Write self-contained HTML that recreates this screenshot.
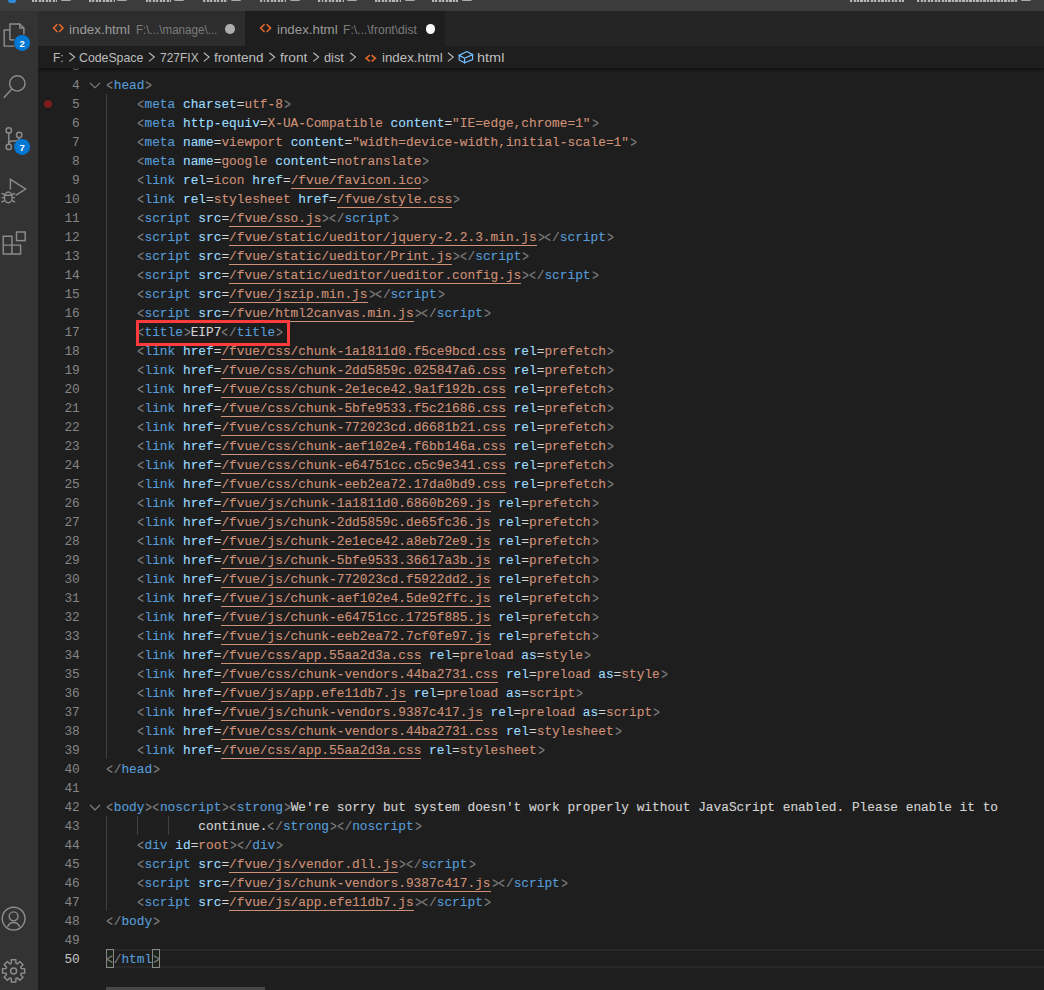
<!DOCTYPE html>
<html><head><meta charset="utf-8">
<style>
html,body{margin:0;padding:0;}
body{width:1044px;height:990px;overflow:hidden;background:#1e1e1e;position:relative;font-family:"Liberation Sans",sans-serif;}
.abs{position:absolute;}
#title{left:0;top:0;width:1044px;height:11px;background:#3c3c3c;overflow:hidden;}
.mi{position:absolute;top:0;height:2px;background:repeating-linear-gradient(90deg,rgba(220,220,220,.75) 0 2px,rgba(220,220,220,.15) 2px 3.5px);}
.br{position:absolute;top:-3px;width:10px;height:3px;border:1px solid rgba(220,220,220,.7);border-top:0;border-radius:0 0 3px 3px;}
#act{left:0;top:11px;width:38px;height:979px;background:#333333;}
#tabs{left:38px;top:11px;width:1006px;height:35px;background:#252526;}
.tab{position:absolute;top:0;height:35px;}
.tl{position:absolute;top:9px;font-size:13px;line-height:16px;color:#969696;white-space:pre;}
.td{position:absolute;top:10px;font-size:11.4px;line-height:16px;color:#7c7c7c;white-space:pre;}
#crumbs{left:38px;top:46px;width:1006px;height:22px;background:#1e1e1e;z-index:5;}
.tx{position:absolute;line-height:16px;white-space:pre;transform-origin:0 0;}
.cr{top:50.2px;font-size:13px;color:#bdbdbd;}
.shadow{position:absolute;left:38px;top:68px;width:1006px;height:4px;background:linear-gradient(rgba(0,0,0,.45),rgba(0,0,0,0));z-index:6;}
.ln{position:absolute;left:106px;height:19px;line-height:21px;white-space:pre;font-family:"Liberation Mono",monospace;font-size:12.82px;color:#d4d4d4;}
.ln i{font-style:normal;-webkit-text-stroke:0.12px currentColor;}
.b{color:#808080}.t{color:#569cd6}.a{color:#9cdcfe}.e{color:#d4d4d4}.v{color:#ce9178}.x{color:#d4d4d4}
.u{color:#ce9178;display:inline-block;vertical-align:top;height:19px;background:linear-gradient(#ce9178,#ce9178) left bottom/100% 1px no-repeat;}
.m{color:#808080;}
.lt,.gt{display:inline-block;vertical-align:top;height:19px;transform-origin:3.85px 9.65px;}
.lt{transform:translate(-0.2px,0.4px) scale(0.86,1.16);}
.gt{transform:translate(0.6px,0.4px) scale(0.86,1.16);}
.num{position:absolute;left:38.8px;width:41px;text-align:right;height:19px;line-height:21px;font-family:"Liberation Mono",monospace;font-size:12.82px;color:#858585;}
.num.cur{color:#c6c6c6;}
.guide{position:absolute;width:1px;background:#404040;}
svg{position:absolute;overflow:visible;}
</style></head><body>
<div id="title" class="abs">
  <div class="abs" style="left:8px;top:0;width:8px;height:3px;background:#2e8ad6;border-radius:0 0 2px 3px;"></div>
  <div class="mi" style="left:32px;width:25px"></div><div class="br" style="left:60px"></div>
  <div class="mi" style="left:89px;width:26px"></div><div class="br" style="left:116px"></div>
  <div class="mi" style="left:146px;width:25px"></div><div class="br" style="left:173px"></div>
  <div class="mi" style="left:203px;width:25px"></div><div class="br" style="left:230px"></div>
  <div class="mi" style="left:260px;width:26px"></div><div class="br" style="left:289px"></div>
  <div class="mi" style="left:318px;width:26px"></div><div class="br" style="left:346px"></div>
  <div class="mi" style="left:375px;width:26px"></div><div class="br" style="left:404px"></div>
  <div class="mi" style="left:432px;width:26px"></div><div class="br" style="left:461px"></div>
  <div class="mi" style="left:850px;width:54px"></div>
  <div class="mi" style="left:917px;width:101px"></div>
  <div class="br" style="left:1020px"></div>
</div>
<div id="act" class="abs"></div>
<!-- activity icons -->
<svg width="38" height="990" style="left:0;top:0" fill="none" stroke="#8c8c8c" stroke-width="1.45">
  <!-- explorer -->
  <path d="M9.6 29.9H4.2V46.1H14.5"/>
  <path d="M9.9 39.9V23.9H19.8L23.9 28V34.5"/>
  <path d="M19.8 23.9V28H23.9"/>
  <path d="M9.9 39.9H14.5"/>
  <circle cx="22.1" cy="42.9" r="8" fill="#0078d4" stroke="none"/>
  <!-- search -->
  <circle cx="17.3" cy="83.4" r="7.7"/>
  <path d="M11.8 89L3.8 97.8"/>
  <!-- scm -->
  <circle cx="8.8" cy="130.4" r="2.7"/>
  <circle cx="19.2" cy="135" r="2.7"/>
  <circle cx="8.8" cy="146.9" r="2.7"/>
  <path d="M8.8 133.1V144.2"/>
  <path d="M19.2 137.7C19.2 140 18 141 15.5 141H12.5C10 141 8.8 142 8.8 144.2"/>
  <circle cx="22.1" cy="146.9" r="8" fill="#0078d4" stroke="none"/>
  <!-- debug -->
  <path d="M10.4 189.6V179.3L25.6 189L15.6 195.3"/>
  <ellipse cx="8.3" cy="197.4" rx="3.9" ry="5.3"/>
  <path d="M4.5 195.3H12.1M1.5 193.4L4.6 194.5M15 193.4L12 194.5M1.5 197.6H4.4M15 197.6H12.2M1.5 202L4.8 200.6M15 202L11.8 200.6"/>
  <!-- extensions -->
  <path d="M3.2 245.1H20.6V254H3.2V236.3H11.9V254"/>
  <rect x="16.5" y="232" width="8.7" height="8.6"/>
  <!-- account -->
  <circle cx="13.6" cy="918.6" r="11.4"/>
  <circle cx="13.6" cy="916.3" r="4.4"/>
  <path d="M7.6 926.8C8.6 924 10.8 922.4 13.6 922.4C16.4 922.4 18.6 924 19.6 926.8"/>
</svg>
<svg width="38" height="40" style="left:0;top:950px" viewBox="0 0 38 40">
  <g transform="translate(13.6 20.9)" fill="none" stroke="#8c8c8c" stroke-width="1.45">
    <path d="M-2.33 -7.55L-2.24 -11.07L2.24 -11.07L2.33 -7.55L3.69 -6.99L6.24 -9.42L9.42 -6.24L6.99 -3.69L7.55 -2.33L11.07 -2.24L11.07 2.24L7.55 2.33L6.99 3.69L9.42 6.24L6.24 9.42L3.69 6.99L2.33 7.55L2.24 11.07L-2.24 11.07L-2.33 7.55L-3.69 6.99L-6.24 9.42L-9.42 6.24L-6.99 3.69L-7.55 2.33L-11.07 2.24L-11.07 -2.24L-7.55 -2.33L-6.99 -3.69L-9.42 -6.24L-6.24 -9.42L-3.69 -6.99Z" stroke-linejoin="round"/>
    <circle r="3"/>
  </g>
</svg>
<div class="abs" style="left:14.1px;top:35.6px;width:16px;height:16px;font:bold 9.5px/16px 'Liberation Sans',sans-serif;color:#fff;text-align:center;z-index:3">2</div>
<div class="abs" style="left:14.1px;top:139.6px;width:16px;height:16px;font:bold 9.5px/16px 'Liberation Sans',sans-serif;color:#fff;text-align:center;z-index:3">7</div>

<div id="tabs" class="abs">
  <div class="tab" style="left:0;width:207px;background:#2d2d2d;"></div>
  <div class="tab" style="left:207px;width:200px;background:#1e1e1e;"></div>
</div>
<svg width="1044" height="80" style="left:0;top:0;z-index:7" fill="none" stroke-linecap="square">
  <g stroke="#e8692c" stroke-width="1.5" stroke-linecap="butt">
    <path d="M57.4 24.2L53.6 28.1L57.4 32M59.2 24.2L63 28.1L59.2 32"/>
    <path d="M264.6 24.2L260.6 28.1L264.6 32M266.6 24.2L270.6 28.1L266.6 32"/>
    <path d="M369.8 55.2L366 58.3L369.8 61.4M371.6 55.2L375.4 58.3L371.6 61.4"/>
  </g>
  <g stroke="#b8b8b8" stroke-width="1.15" stroke-linecap="butt">
    <path d="M69.3 52.8L74.6 57.1L69.3 61.4M149 52.8L154.3 57.1L149 61.4M203.8 52.8L209.1 57.1L203.8 61.4M269.3 52.8L274.6 57.1L269.3 61.4M313.3 52.8L318.6 57.1L313.3 61.4M350.2 52.8L355.5 57.1L350.2 61.4M447.9 52.8L453.2 57.1L447.9 61.4"/>
  </g>
  <g stroke="#75beff" stroke-width="1.2" stroke-linejoin="round">
    <path d="M459.2 55.4L466.8 51.5L472.6 54.6V59.6L464.6 62.8L459.2 60Z"/>
    <path d="M459.2 55.4L464.6 58.3L472.6 54.6M464.6 58.3V62.8"/>
  </g>
</svg>
<div class="abs" style="left:225.4px;top:24.4px;width:9.4px;height:9.4px;border-radius:50%;background:#acacac;z-index:7"></div>
<div class="abs" style="left:425.7px;top:24.2px;width:9.4px;height:9.4px;border-radius:50%;background:#f8f8f8;z-index:7"></div>
<div class="abs" style="left:0;top:0;z-index:7">
  <div class="tx" style="left:69.38px;top:21.8px;font-size:13px;color:#9a9a9a;transform:scaleX(1.028)">index.html</div>
  <div class="tx" style="left:135.53px;top:22.1px;font-size:12px;color:#7c7c7c;transform:scaleX(0.968)">F:\...\manage\...</div>
  <div class="tx" style="left:276.78px;top:21.8px;font-size:13px;color:#9a9a9a;transform:scaleX(1.023)">index.html</div>
  <div class="tx" style="left:342.69px;top:22.1px;font-size:12px;color:#7c7c7c;transform:scaleX(1.007)">F:\...\front\dist</div>
  <div class="tx cr" style="left:53.39px;transform:scaleX(0.915)">F:</div>
  <div class="tx cr" style="left:79.13px;transform:scaleX(0.946)">CodeSpace</div>
  <div class="tx cr" style="left:159.55px;transform:scaleX(0.922)">727FIX</div>
  <div class="tx cr" style="left:214.19px;transform:scaleX(1.039)">frontend</div>
  <div class="tx cr" style="left:279.99px;transform:scaleX(1.054)">front</div>
  <div class="tx cr" style="left:324.01px;transform:scaleX(0.98)">dist</div>
  <div class="tx cr" style="left:381.78px;transform:scaleX(1.024)">index.html</div>
  <div class="tx cr" style="left:476.5px;transform:scaleX(1.114)">html</div>
</div>
<div id="crumbs" class="abs"></div>
<div class="shadow"></div>
<div class="guide" style="left:106px;top:94px;height:665px"></div>
<div class="guide" style="left:106px;top:816px;height:95px"></div>
<div class="guide" style="left:137px;top:816px;height:19px"></div>
<div class="guide" style="left:168px;top:816px;height:19px"></div>
<!-- current line border -->
<div class="abs" style="left:106px;top:949px;width:938px;height:15px;border-top:2px solid #282828;border-bottom:2px solid #282828;"></div>
<!-- bracket match -->
<div class="abs" style="left:106px;top:949px;width:6px;height:17px;border:1px solid #888;background:rgba(0,100,0,.1)"></div>
<div class="abs" style="left:152px;top:949px;width:6px;height:17px;border:1px solid #888;background:rgba(0,100,0,.1)"></div>
<!-- breakpoint -->
<div class="abs" style="left:43.6px;top:100px;width:8px;height:8px;border-radius:50%;background:#7a1e17"></div>
<!-- fold chevrons -->
<svg width="20" height="990" style="left:85px;top:0" fill="none" stroke="#858585" stroke-width="1.15">
  <path d="M5 82.8L10 87.8L15 82.8"/>
  <path d="M5 805L10 810L15 805"/>
</svg>
<div class="num" style="top:56px">3</div>
<div class="ln" style="top:75px"><i class="b lt">&lt;</i><i class="t">head</i><i class="b gt">&gt;</i></div>
<div class="num" style="top:75px">4</div>
<div class="ln" style="top:94px"><i class="x">    </i><i class="b lt">&lt;</i><i class="t">meta</i><i class="x"> </i><i class="a">charset</i><i class="e">=</i><i class="v">utf-8</i><i class="b gt">&gt;</i></div>
<div class="num" style="top:94px">5</div>
<div class="ln" style="top:113px"><i class="x">    </i><i class="b lt">&lt;</i><i class="t">meta</i><i class="x"> </i><i class="a">http-equiv</i><i class="e">=</i><i class="v">X-UA-Compatible</i><i class="x"> </i><i class="a">content</i><i class="e">=</i><i class="v">"IE=edge,chrome=1"</i><i class="b gt">&gt;</i></div>
<div class="num" style="top:113px">6</div>
<div class="ln" style="top:132px"><i class="x">    </i><i class="b lt">&lt;</i><i class="t">meta</i><i class="x"> </i><i class="a">name</i><i class="e">=</i><i class="v">viewport</i><i class="x"> </i><i class="a">content</i><i class="e">=</i><i class="v">"width=device-width,initial-scale=1"</i><i class="b gt">&gt;</i></div>
<div class="num" style="top:132px">7</div>
<div class="ln" style="top:151px"><i class="x">    </i><i class="b lt">&lt;</i><i class="t">meta</i><i class="x"> </i><i class="a">name</i><i class="e">=</i><i class="v">google</i><i class="x"> </i><i class="a">content</i><i class="e">=</i><i class="v">notranslate</i><i class="b gt">&gt;</i></div>
<div class="num" style="top:151px">8</div>
<div class="ln" style="top:170px"><i class="x">    </i><i class="b lt">&lt;</i><i class="t">link</i><i class="x"> </i><i class="a">rel</i><i class="e">=</i><i class="v">icon</i><i class="x"> </i><i class="a">href</i><i class="e">=</i><i class="u">/fvue/favicon.ico</i><i class="b gt">&gt;</i></div>
<div class="num" style="top:170px">9</div>
<div class="ln" style="top:189px"><i class="x">    </i><i class="b lt">&lt;</i><i class="t">link</i><i class="x"> </i><i class="a">rel</i><i class="e">=</i><i class="v">stylesheet</i><i class="x"> </i><i class="a">href</i><i class="e">=</i><i class="u">/fvue/style.css</i><i class="b gt">&gt;</i></div>
<div class="num" style="top:189px">10</div>
<div class="ln" style="top:208px"><i class="x">    </i><i class="b lt">&lt;</i><i class="t">script</i><i class="x"> </i><i class="a">src</i><i class="e">=</i><i class="u">/fvue/sso.js</i><i class="b gt">&gt;</i><i class="b lt">&lt;</i><i class="b">/</i><i class="t">script</i><i class="b gt">&gt;</i></div>
<div class="num" style="top:208px">11</div>
<div class="ln" style="top:227px"><i class="x">    </i><i class="b lt">&lt;</i><i class="t">script</i><i class="x"> </i><i class="a">src</i><i class="e">=</i><i class="u">/fvue/static/ueditor/jquery-2.2.3.min.js</i><i class="b gt">&gt;</i><i class="b lt">&lt;</i><i class="b">/</i><i class="t">script</i><i class="b gt">&gt;</i></div>
<div class="num" style="top:227px">12</div>
<div class="ln" style="top:246px"><i class="x">    </i><i class="b lt">&lt;</i><i class="t">script</i><i class="x"> </i><i class="a">src</i><i class="e">=</i><i class="u">/fvue/static/ueditor/Print.js</i><i class="b gt">&gt;</i><i class="b lt">&lt;</i><i class="b">/</i><i class="t">script</i><i class="b gt">&gt;</i></div>
<div class="num" style="top:246px">13</div>
<div class="ln" style="top:265px"><i class="x">    </i><i class="b lt">&lt;</i><i class="t">script</i><i class="x"> </i><i class="a">src</i><i class="e">=</i><i class="u">/fvue/static/ueditor/ueditor.config.js</i><i class="b gt">&gt;</i><i class="b lt">&lt;</i><i class="b">/</i><i class="t">script</i><i class="b gt">&gt;</i></div>
<div class="num" style="top:265px">14</div>
<div class="ln" style="top:284px"><i class="x">    </i><i class="b lt">&lt;</i><i class="t">script</i><i class="x"> </i><i class="a">src</i><i class="e">=</i><i class="u">/fvue/jszip.min.js</i><i class="b gt">&gt;</i><i class="b lt">&lt;</i><i class="b">/</i><i class="t">script</i><i class="b gt">&gt;</i></div>
<div class="num" style="top:284px">15</div>
<div class="ln" style="top:303px"><i class="x">    </i><i class="b lt">&lt;</i><i class="t">script</i><i class="x"> </i><i class="a">src</i><i class="e">=</i><i class="u">/fvue/html2canvas.min.js</i><i class="b gt">&gt;</i><i class="b lt">&lt;</i><i class="b">/</i><i class="t">script</i><i class="b gt">&gt;</i></div>
<div class="num" style="top:303px">16</div>
<div class="ln" style="top:322px"><i class="x">    </i><i class="b lt">&lt;</i><i class="t">title</i><i class="b gt">&gt;</i><i class="x">EIP7</i><i class="b lt">&lt;</i><i class="b">/</i><i class="t">title</i><i class="b gt">&gt;</i></div>
<div class="num" style="top:322px">17</div>
<div class="ln" style="top:341px"><i class="x">    </i><i class="b lt">&lt;</i><i class="t">link</i><i class="x"> </i><i class="a">href</i><i class="e">=</i><i class="u">/fvue/css/chunk-1a1811d0.f5ce9bcd.css</i><i class="x"> </i><i class="a">rel</i><i class="e">=</i><i class="v">prefetch</i><i class="b gt">&gt;</i></div>
<div class="num" style="top:341px">18</div>
<div class="ln" style="top:360px"><i class="x">    </i><i class="b lt">&lt;</i><i class="t">link</i><i class="x"> </i><i class="a">href</i><i class="e">=</i><i class="u">/fvue/css/chunk-2dd5859c.025847a6.css</i><i class="x"> </i><i class="a">rel</i><i class="e">=</i><i class="v">prefetch</i><i class="b gt">&gt;</i></div>
<div class="num" style="top:360px">19</div>
<div class="ln" style="top:379px"><i class="x">    </i><i class="b lt">&lt;</i><i class="t">link</i><i class="x"> </i><i class="a">href</i><i class="e">=</i><i class="u">/fvue/css/chunk-2e1ece42.9a1f192b.css</i><i class="x"> </i><i class="a">rel</i><i class="e">=</i><i class="v">prefetch</i><i class="b gt">&gt;</i></div>
<div class="num" style="top:379px">20</div>
<div class="ln" style="top:398px"><i class="x">    </i><i class="b lt">&lt;</i><i class="t">link</i><i class="x"> </i><i class="a">href</i><i class="e">=</i><i class="u">/fvue/css/chunk-5bfe9533.f5c21686.css</i><i class="x"> </i><i class="a">rel</i><i class="e">=</i><i class="v">prefetch</i><i class="b gt">&gt;</i></div>
<div class="num" style="top:398px">21</div>
<div class="ln" style="top:417px"><i class="x">    </i><i class="b lt">&lt;</i><i class="t">link</i><i class="x"> </i><i class="a">href</i><i class="e">=</i><i class="u">/fvue/css/chunk-772023cd.d6681b21.css</i><i class="x"> </i><i class="a">rel</i><i class="e">=</i><i class="v">prefetch</i><i class="b gt">&gt;</i></div>
<div class="num" style="top:417px">22</div>
<div class="ln" style="top:436px"><i class="x">    </i><i class="b lt">&lt;</i><i class="t">link</i><i class="x"> </i><i class="a">href</i><i class="e">=</i><i class="u">/fvue/css/chunk-aef102e4.f6bb146a.css</i><i class="x"> </i><i class="a">rel</i><i class="e">=</i><i class="v">prefetch</i><i class="b gt">&gt;</i></div>
<div class="num" style="top:436px">23</div>
<div class="ln" style="top:455px"><i class="x">    </i><i class="b lt">&lt;</i><i class="t">link</i><i class="x"> </i><i class="a">href</i><i class="e">=</i><i class="u">/fvue/css/chunk-e64751cc.c5c9e341.css</i><i class="x"> </i><i class="a">rel</i><i class="e">=</i><i class="v">prefetch</i><i class="b gt">&gt;</i></div>
<div class="num" style="top:455px">24</div>
<div class="ln" style="top:474px"><i class="x">    </i><i class="b lt">&lt;</i><i class="t">link</i><i class="x"> </i><i class="a">href</i><i class="e">=</i><i class="u">/fvue/css/chunk-eeb2ea72.17da0bd9.css</i><i class="x"> </i><i class="a">rel</i><i class="e">=</i><i class="v">prefetch</i><i class="b gt">&gt;</i></div>
<div class="num" style="top:474px">25</div>
<div class="ln" style="top:493px"><i class="x">    </i><i class="b lt">&lt;</i><i class="t">link</i><i class="x"> </i><i class="a">href</i><i class="e">=</i><i class="u">/fvue/js/chunk-1a1811d0.6860b269.js</i><i class="x"> </i><i class="a">rel</i><i class="e">=</i><i class="v">prefetch</i><i class="b gt">&gt;</i></div>
<div class="num" style="top:493px">26</div>
<div class="ln" style="top:512px"><i class="x">    </i><i class="b lt">&lt;</i><i class="t">link</i><i class="x"> </i><i class="a">href</i><i class="e">=</i><i class="u">/fvue/js/chunk-2dd5859c.de65fc36.js</i><i class="x"> </i><i class="a">rel</i><i class="e">=</i><i class="v">prefetch</i><i class="b gt">&gt;</i></div>
<div class="num" style="top:512px">27</div>
<div class="ln" style="top:531px"><i class="x">    </i><i class="b lt">&lt;</i><i class="t">link</i><i class="x"> </i><i class="a">href</i><i class="e">=</i><i class="u">/fvue/js/chunk-2e1ece42.a8eb72e9.js</i><i class="x"> </i><i class="a">rel</i><i class="e">=</i><i class="v">prefetch</i><i class="b gt">&gt;</i></div>
<div class="num" style="top:531px">28</div>
<div class="ln" style="top:550px"><i class="x">    </i><i class="b lt">&lt;</i><i class="t">link</i><i class="x"> </i><i class="a">href</i><i class="e">=</i><i class="u">/fvue/js/chunk-5bfe9533.36617a3b.js</i><i class="x"> </i><i class="a">rel</i><i class="e">=</i><i class="v">prefetch</i><i class="b gt">&gt;</i></div>
<div class="num" style="top:550px">29</div>
<div class="ln" style="top:569px"><i class="x">    </i><i class="b lt">&lt;</i><i class="t">link</i><i class="x"> </i><i class="a">href</i><i class="e">=</i><i class="u">/fvue/js/chunk-772023cd.f5922dd2.js</i><i class="x"> </i><i class="a">rel</i><i class="e">=</i><i class="v">prefetch</i><i class="b gt">&gt;</i></div>
<div class="num" style="top:569px">30</div>
<div class="ln" style="top:588px"><i class="x">    </i><i class="b lt">&lt;</i><i class="t">link</i><i class="x"> </i><i class="a">href</i><i class="e">=</i><i class="u">/fvue/js/chunk-aef102e4.5de92ffc.js</i><i class="x"> </i><i class="a">rel</i><i class="e">=</i><i class="v">prefetch</i><i class="b gt">&gt;</i></div>
<div class="num" style="top:588px">31</div>
<div class="ln" style="top:607px"><i class="x">    </i><i class="b lt">&lt;</i><i class="t">link</i><i class="x"> </i><i class="a">href</i><i class="e">=</i><i class="u">/fvue/js/chunk-e64751cc.1725f885.js</i><i class="x"> </i><i class="a">rel</i><i class="e">=</i><i class="v">prefetch</i><i class="b gt">&gt;</i></div>
<div class="num" style="top:607px">32</div>
<div class="ln" style="top:626px"><i class="x">    </i><i class="b lt">&lt;</i><i class="t">link</i><i class="x"> </i><i class="a">href</i><i class="e">=</i><i class="u">/fvue/js/chunk-eeb2ea72.7cf0fe97.js</i><i class="x"> </i><i class="a">rel</i><i class="e">=</i><i class="v">prefetch</i><i class="b gt">&gt;</i></div>
<div class="num" style="top:626px">33</div>
<div class="ln" style="top:645px"><i class="x">    </i><i class="b lt">&lt;</i><i class="t">link</i><i class="x"> </i><i class="a">href</i><i class="e">=</i><i class="u">/fvue/css/app.55aa2d3a.css</i><i class="x"> </i><i class="a">rel</i><i class="e">=</i><i class="v">preload</i><i class="x"> </i><i class="a">as</i><i class="e">=</i><i class="v">style</i><i class="b gt">&gt;</i></div>
<div class="num" style="top:645px">34</div>
<div class="ln" style="top:664px"><i class="x">    </i><i class="b lt">&lt;</i><i class="t">link</i><i class="x"> </i><i class="a">href</i><i class="e">=</i><i class="u">/fvue/css/chunk-vendors.44ba2731.css</i><i class="x"> </i><i class="a">rel</i><i class="e">=</i><i class="v">preload</i><i class="x"> </i><i class="a">as</i><i class="e">=</i><i class="v">style</i><i class="b gt">&gt;</i></div>
<div class="num" style="top:664px">35</div>
<div class="ln" style="top:683px"><i class="x">    </i><i class="b lt">&lt;</i><i class="t">link</i><i class="x"> </i><i class="a">href</i><i class="e">=</i><i class="u">/fvue/js/app.efe11db7.js</i><i class="x"> </i><i class="a">rel</i><i class="e">=</i><i class="v">preload</i><i class="x"> </i><i class="a">as</i><i class="e">=</i><i class="v">script</i><i class="b gt">&gt;</i></div>
<div class="num" style="top:683px">36</div>
<div class="ln" style="top:702px"><i class="x">    </i><i class="b lt">&lt;</i><i class="t">link</i><i class="x"> </i><i class="a">href</i><i class="e">=</i><i class="u">/fvue/js/chunk-vendors.9387c417.js</i><i class="x"> </i><i class="a">rel</i><i class="e">=</i><i class="v">preload</i><i class="x"> </i><i class="a">as</i><i class="e">=</i><i class="v">script</i><i class="b gt">&gt;</i></div>
<div class="num" style="top:702px">37</div>
<div class="ln" style="top:721px"><i class="x">    </i><i class="b lt">&lt;</i><i class="t">link</i><i class="x"> </i><i class="a">href</i><i class="e">=</i><i class="u">/fvue/css/chunk-vendors.44ba2731.css</i><i class="x"> </i><i class="a">rel</i><i class="e">=</i><i class="v">stylesheet</i><i class="b gt">&gt;</i></div>
<div class="num" style="top:721px">38</div>
<div class="ln" style="top:740px"><i class="x">    </i><i class="b lt">&lt;</i><i class="t">link</i><i class="x"> </i><i class="a">href</i><i class="e">=</i><i class="u">/fvue/css/app.55aa2d3a.css</i><i class="x"> </i><i class="a">rel</i><i class="e">=</i><i class="v">stylesheet</i><i class="b gt">&gt;</i></div>
<div class="num" style="top:740px">39</div>
<div class="ln" style="top:759px"><i class="b lt">&lt;</i><i class="b">/</i><i class="t">head</i><i class="b gt">&gt;</i></div>
<div class="num" style="top:759px">40</div>
<div class="ln" style="top:778px"></div>
<div class="num" style="top:778px">41</div>
<div class="ln" style="top:797px"><i class="b lt">&lt;</i><i class="t">body</i><i class="b gt">&gt;</i><i class="b lt">&lt;</i><i class="t">noscript</i><i class="b gt">&gt;</i><i class="b lt">&lt;</i><i class="t">strong</i><i class="b gt">&gt;</i><i class="x">We're sorry but system doesn't work properly without JavaScript enabled. Please enable it to</i></div>
<div class="num" style="top:797px">42</div>
<div class="ln" style="top:816px"><i class="x">            continue.</i><i class="b lt">&lt;</i><i class="b">/</i><i class="t">strong</i><i class="b gt">&gt;</i><i class="b lt">&lt;</i><i class="b">/</i><i class="t">noscript</i><i class="b gt">&gt;</i></div>
<div class="num" style="top:816px">43</div>
<div class="ln" style="top:835px"><i class="x">    </i><i class="b lt">&lt;</i><i class="t">div</i><i class="x"> </i><i class="a">id</i><i class="e">=</i><i class="v">root</i><i class="b gt">&gt;</i><i class="b lt">&lt;</i><i class="b">/</i><i class="t">div</i><i class="b gt">&gt;</i></div>
<div class="num" style="top:835px">44</div>
<div class="ln" style="top:854px"><i class="x">    </i><i class="b lt">&lt;</i><i class="t">script</i><i class="x"> </i><i class="a">src</i><i class="e">=</i><i class="u">/fvue/js/vendor.dll.js</i><i class="b gt">&gt;</i><i class="b lt">&lt;</i><i class="b">/</i><i class="t">script</i><i class="b gt">&gt;</i></div>
<div class="num" style="top:854px">45</div>
<div class="ln" style="top:873px"><i class="x">    </i><i class="b lt">&lt;</i><i class="t">script</i><i class="x"> </i><i class="a">src</i><i class="e">=</i><i class="u">/fvue/js/chunk-vendors.9387c417.js</i><i class="b gt">&gt;</i><i class="b lt">&lt;</i><i class="b">/</i><i class="t">script</i><i class="b gt">&gt;</i></div>
<div class="num" style="top:873px">46</div>
<div class="ln" style="top:892px"><i class="x">    </i><i class="b lt">&lt;</i><i class="t">script</i><i class="x"> </i><i class="a">src</i><i class="e">=</i><i class="u">/fvue/js/app.efe11db7.js</i><i class="b gt">&gt;</i><i class="b lt">&lt;</i><i class="b">/</i><i class="t">script</i><i class="b gt">&gt;</i></div>
<div class="num" style="top:892px">47</div>
<div class="ln" style="top:911px"><i class="b lt">&lt;</i><i class="b">/</i><i class="t">body</i><i class="b gt">&gt;</i></div>
<div class="num" style="top:911px">48</div>
<div class="ln" style="top:930px"></div>
<div class="num" style="top:930px">49</div>
<div class="ln" style="top:949px"><i class="m lt">&lt;</i><i class="b">/</i><i class="t">html</i><i class="m gt">&gt;</i></div>
<div class="num cur" style="top:949px">50</div>
<!-- red box -->
<div class="abs" style="left:136px;top:320px;width:148px;height:20px;border:3px solid #ff3b3b;z-index:4"></div>
<!-- h scrollbar -->
<div class="abs" style="left:106px;top:987px;width:159px;height:3px;background:#474747"></div>
</body></html>
